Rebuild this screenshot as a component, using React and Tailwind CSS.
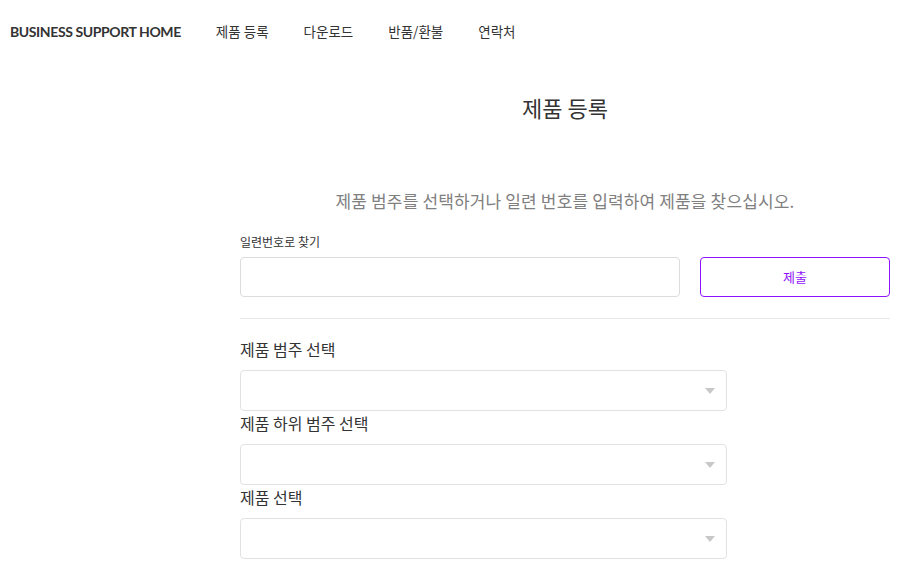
const KR = { fontFamily: '"Noto Sans CJK KR", "Noto Sans", sans-serif' }

const NAV_ITEMS = ['제품 등록', '다운로드', '반품/환불', '연락처']

function Caret() {
  return (
    <svg width="10" height="6" viewBox="0 0 10 6" className="shrink-0">
      <path d="M0 0 L10 0 L5 6 Z" fill="#c8c8c8" />
    </svg>
  )
}

function SelectField({ label }) {
  return (
    <div>
      <div className="text-[16px] leading-[24px] text-[#333]">{label}</div>
      <div className="mt-[9px] w-[487px] h-[41px] rounded-[4px] border border-[#e2e2e2] flex items-center justify-end pr-[11px]">
        <Caret />
      </div>
    </div>
  )
}

export default function App() {
  return (
    <div className="w-[920px] min-h-[576px] bg-white text-[#333]" style={KR}>
      {/* Top navigation */}
      <nav className="h-[62px] flex items-center gap-[35px] pl-[10px]">
        <span className="text-[14px] font-bold tracking-[-0.4px] text-[#333]" style={{ fontFamily: 'Lato, "Noto Sans", sans-serif' }}>
          BUSINESS SUPPORT HOME
        </span>
        {NAV_ITEMS.map(item => (
          <span key={item} className="text-[13.5px] text-[#333]">{item}</span>
        ))}
      </nav>

      {/* Content column */}
      <main className="ml-[240px] w-[650px]">
        <h1 className="mt-[29px] text-center text-[22px] leading-[32px] text-[#333]">제품 등록</h1>
        <p className="mt-[66px] text-center text-[17px] leading-[24px] tracking-[0.15px] text-[#808080]">
          제품 범주를 선택하거나 일련 번호를 입력하여 제품을 찾으십시오.
        </p>

        <div className="mt-[21px] text-[12px] leading-[16px] text-[#333]">일련번호로 찾기</div>
        <div className="mt-[7px] flex gap-[20px]">
          <div className="w-[440px] h-[40px] rounded-[4px] border border-[#dcdcdc]" />
          <button className="w-[190px] h-[40px] rounded-[4px] border border-[#9013fe] text-[13px] text-[#9013fe] bg-white">
            제출
          </button>
        </div>

        <div className="mt-[21px] h-px bg-[#e8e8e8]" />

        <div className="mt-[18px] flex flex-col">
          <SelectField label="제품 범주 선택" />
          <SelectField label="제품 하위 범주 선택" />
          <SelectField label="제품 선택" />
        </div>
      </main>
    </div>
  )
}
